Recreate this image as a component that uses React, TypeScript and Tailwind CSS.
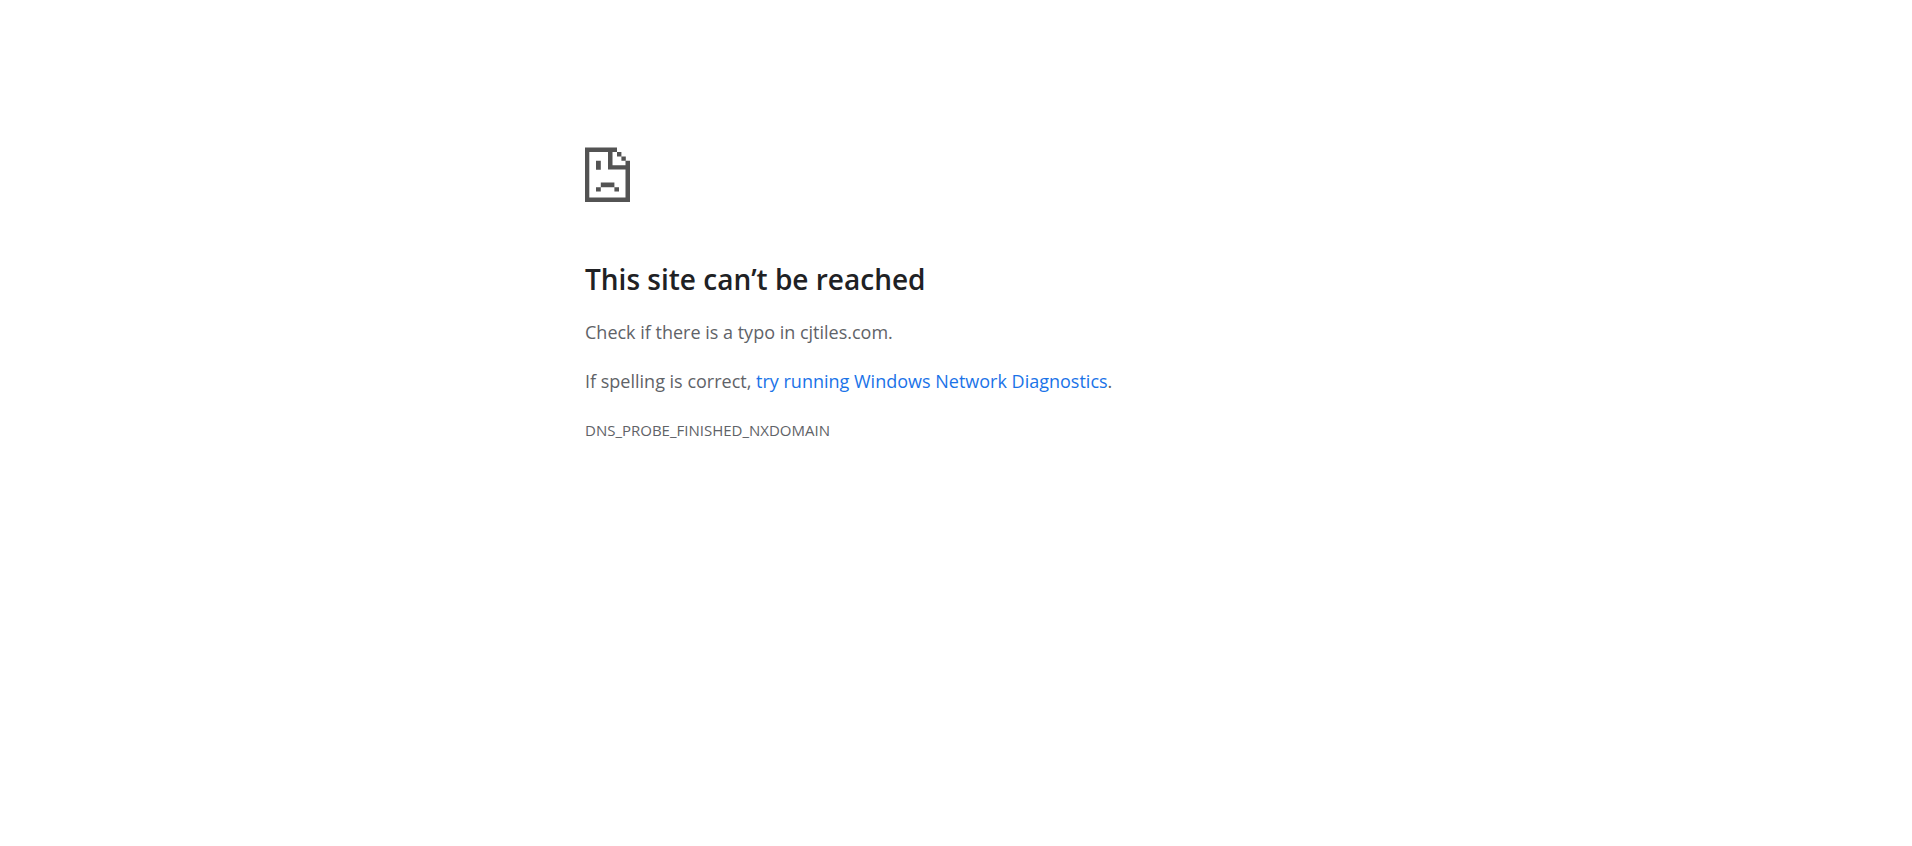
export default function App() {
  return (
    <main className="mx-auto w-full max-w-[742px] pt-[147px] font-['Segoe_UI','Open_Sans',sans-serif] text-lg leading-7 text-[#5f6368]">
      <svg
        className="block h-[55px] w-[45px]"
        viewBox="0 0 45 55"
        fill="#535353"
        aria-hidden="true"
      >
        <path d="M0 .5H32V5H27.5V18.2H40.5V13.8H45V55H0ZM4.3 5V50.5H40.5V22.6H23V5Z" fillRule="evenodd" />
        <path d="M32 5H36.4V9.4H32ZM36.4 9.4H40.8V13.8H36.4ZM11 13.8H15.8V22.8H11ZM15.8 35.6H29.4V40.2H15.8ZM11 40.2H15.8V44.6H11ZM29.4 40.2H34V44.6H29.4Z" />
      </svg>
      <h1 className="mt-[57px] text-[28px] leading-10 font-semibold text-[#202124]">
        This site can’t be reached
      </h1>
      <p className="mt-[19px]">Check if there is a typo in cjtiles.com.</p>
      <p className="mt-[21px]">
        If spelling is correct,{' '}
        <a href="#diagnostics" className="text-[#1a73e8]">
          try running Windows Network Diagnostics
        </a>
        .
      </p>
      <p className="mt-[21px] text-[15px]">DNS_PROBE_FINISHED_NXDOMAIN</p>
    </main>
  );
}
